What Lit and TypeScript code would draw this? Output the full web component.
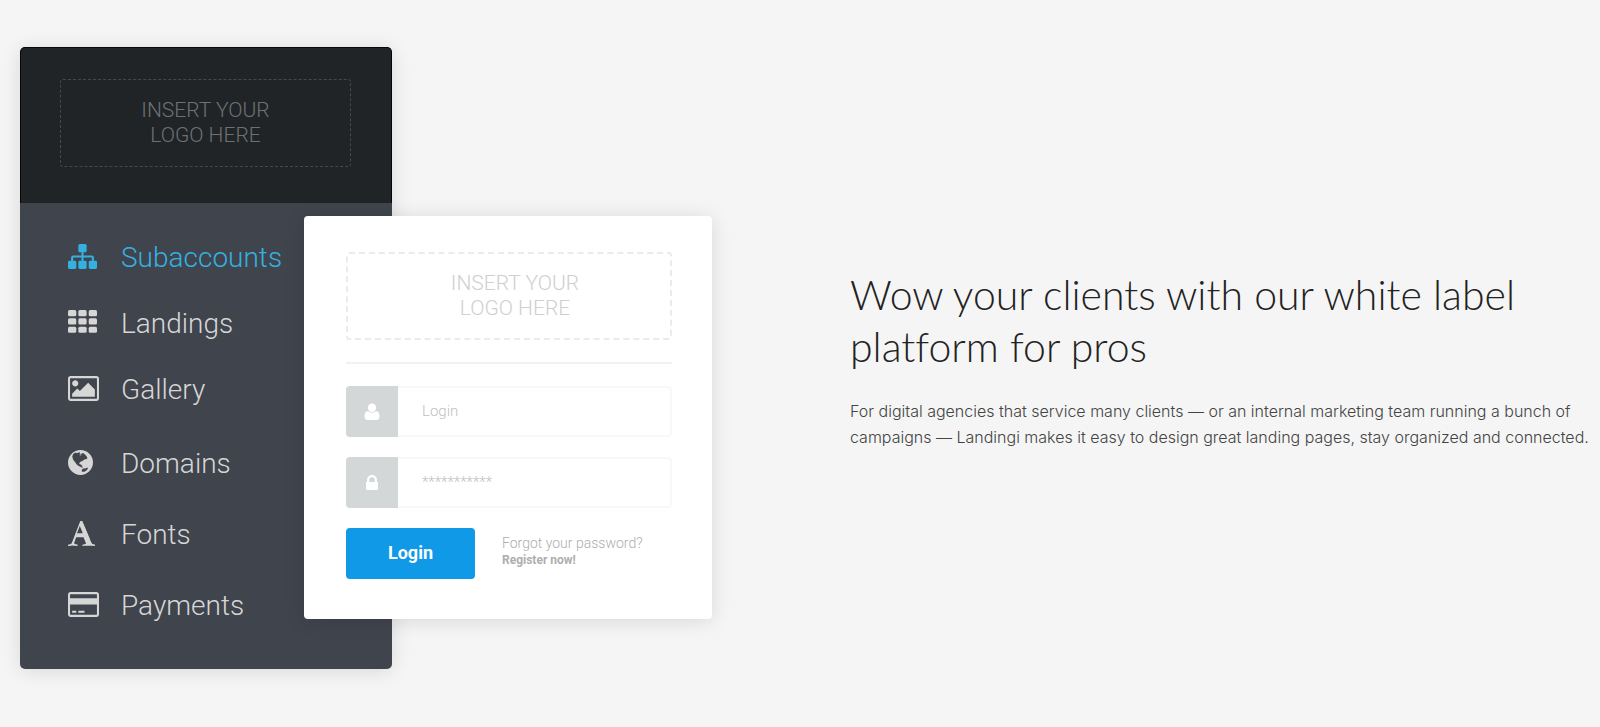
import { LitElement, html, svg, css } from "lit";
import { customElement } from "lit/decorators.js";

const icons = {
  sitemap: svg`<svg class="icon" viewBox="0 0 1792 1792" width="29" height="29" aria-hidden="true"><path d="M1792 1248v320q0 40-28 68t-68 28h-320q-40 0-68-28t-28-68v-320q0-40 28-68t68-28h96v-192h-512v192h96q40 0 68 28t28 68v320q0 40-28 68t-68 28h-320q-40 0-68-28t-28-68v-320q0-40 28-68t68-28h96v-192h-512v192h96q40 0 68 28t28 68v320q0 40-28 68t-68 28h-320q-40 0-68-28t-28-68v-320q0-40 28-68t68-28h96v-192q0-52 38-90t90-38h512v-192h-96q-40 0-68-28t-28-68v-320q0-40 28-68t68-28h320q40 0 68 28t28 68v320q0 40-28 68t-68 28h-96v192h512q52 0 90 38t38 90v192h96q40 0 68 28t28 68z"/></svg>`,
  grid: svg`<svg class="icon" viewBox="0 0 1792 1792" width="29" height="29" aria-hidden="true">${[128, 640, 1152].map((y) =>
    [0, 640, 1280].map((x) => svg`<rect x=${x} y=${y} width="512" height="384" rx="96"/>`)
  )}</svg>`,
  image: svg`<svg class="icon" viewBox="0 0 1920 1792" width="31" height="29" aria-hidden="true"><path d="M640 576q0 80-56 136t-136 56-136-56-56-136 56-136 136-56 136 56 56 136zm1024 384v448h-1408v-192l320-320 160 160 512-512zm96-704h-1600q-13 0-22.500 9.500t-9.500 22.500v1216q0 13 9.500 22.500t22.500 9.500h1600q13 0 22.500-9.500t9.500-22.500v-1216q0-13-9.500-22.500t-22.500-9.500zm160 32v1216q0 66-47 113t-113 47h-1600q-66 0-113-47t-47-113v-1216q0-66 47-113t113-47h1600q66 0 113 47t47 113z"/></svg>`,
  globe: svg`<svg class="icon" viewBox="0 0 25 29" width="25" height="29" aria-hidden="true"><path fill-rule="evenodd" d="M12.500 2a12.500 12.500 0 1 1 0 25a12.500 12.500 0 0 1 0-25zM4.300 8.200L5.200 6 7 4.800l2.500.2 1.900-.8.900 1 -1 1.200 1.400.5.900-1.500 1.500-.4 1.600 1.200 1.700 1.800 1.100 2.300-1.500 1-1.600.2-1.600 1.300-1.800.7-1.300 1.100-.5 1.500 1.500.4 1 .5.100 1.300 1.200.8-.7.600-2-.9-2-1-1.800-1.600-1.500-2.300-1.700-1.900-.7-2zM12.700 5.800l.7 1.500-1.300.3zM14 23.800l-.3-1.700 1.400-1.500 2.100-.2 2.300-.9.400 1.300-1.500 1.800-2 1.200z"/></svg>`,
  font: svg`<svg class="icon" viewBox="0 0 1664 1792" width="27" height="29" aria-hidden="true"><path d="M725 431l-170 450q33 0 136.500 2t160.500 2q19 0 57-2-87-253-184-452zm-725 1233l2-79q23-7 56-12.500t57-10.500 49.500-14.500 44.500-29 31-50.500l237-616 280-724h128q8 14 11 21l205 480q33 78 106 257.500t114 274.500q15 34 58 144.500t72 168.500q20 45 35 57 19 15 88 29.500t84 20.500q6 38 6 57 0 5-.5 13.500t-.5 12.500q-63 0-190-8t-191-8q-76 0-215 7t-178 8q0-43 4-78l131-28q1 0 12.500-2.500t15.500-3.500 14.500-4.500 15-6.500 11-8 9-11 2.500-14q0-16-31-96.500t-72-177.500-42-100l-450-2q-26 58-76.500 195.500t-50.500 162.500q0 22 14 37.500t43.500 24.500 48.500 13.500 57 8.500 41 4q1 19 1 58 0 9-2 27-58 0-174.500-10t-174.500-10q-8 0-26.500 4t-21.500 4q-80 14-188 14z"/></svg>`,
  card: svg`<svg class="icon" viewBox="0 0 1920 1792" width="31" height="29" aria-hidden="true"><path d="M1760 128q66 0 113 47t47 113v1216q0 66-47 113t-113 47h-1600q-66 0-113-47t-47-113v-1216q0-66 47-113t113-47h1600zm-1600 128q-13 0-22.500 9.500t-9.500 22.500v224h1664v-224q0-13-9.500-22.500t-22.500-9.500h-1600zm1600 1280q13 0 22.500-9.500t9.500-22.500v-608h-1664v608q0 13 9.500 22.500t22.500 9.500h1600zm-1504-128v-128h256v128h-256zm384 0v-128h384v128h-384z"/></svg>`,
};

const groups = [
  [
    { label: "Subaccounts", icon: icons.sitemap, active: true },
    { label: "Landings", icon: icons.grid },
    { label: "Gallery", icon: icons.image },
  ],
  [
    { label: "Domains", icon: icons.globe },
    { label: "Fonts", icon: icons.font },
    { label: "Payments", icon: icons.card },
  ],
];

@customElement("app-root")
export class AppRoot extends LitElement {
  static styles = css`
    :host {
      display: block;
      min-height: 100vh;
      background: #f5f5f5;
      font-family: Roboto, "Liberation Sans", sans-serif;
      font-weight: 300;
    }
    * {
      box-sizing: border-box;
    }
    .hero {
      display: grid;
      grid-template-columns: minmax(692px, 1fr) minmax(0, 744px);
      column-gap: 138px;
      align-items: center;
      padding: 47px 6px 58px 20px;
    }
    .showcase {
      display: grid;
      grid-template-columns: 284px 88px 320px;
      align-items: start;
    }
    .panel {
      grid-area: 1 / 1 / 2 / 3;
      border-radius: 5px;
      overflow: hidden;
      background: #40444d;
      box-shadow: 0 2px 20px rgba(0, 0, 0, 0.12);
    }
    .brand {
      padding: 31px 40px 36px 39px;
      background: #202427;
      border: 1px solid #060708;
      border-width: 1px 1px 0;
      border-radius: 5px 5px 0 0;
    }
    .logo {
      display: grid;
      place-items: center;
      height: 88px;
      border: 1px dashed #46494c;
      border-radius: 3px;
      font-size: 21px;
      line-height: 25px;
      text-align: center;
      color: #6e7173;
    }
    .menu {
      display: grid;
      gap: 34px;
      padding: 34px 48px 44px;
    }
    .group {
      display: grid;
      gap: 26px;
      margin: 0;
      padding: 0;
      list-style: none;
    }
    .group + .group {
      gap: 31px;
    }
    .item {
      display: grid;
      grid-template-columns: 53px auto;
      align-items: center;
      height: 40px;
      font-size: 28px;
      color: #d6d6d6;
      text-decoration: none;
    }
    .item .icon {
      margin-bottom: 2px;
    }
    .active {
      color: #35b1e1;
    }
    .icon {
      display: block;
      fill: currentColor;
    }
    .card {
      grid-area: 1 / 2 / 2 / 4;
      z-index: 1;
      margin-top: 169px;
      padding: 36px 40px 40px 42px;
      border-radius: 4px;
      background: #fff;
      box-shadow: 0 2px 20px rgba(0, 0, 0, 0.12);
    }
    .card .logo {
      padding-left: 12px;
      border: 2px dashed #ebebeb;
      color: #cfcfcf;
    }
    .rule {
      height: 2px;
      margin: 22px 0;
      border: 0;
      background: #f1f1f1;
    }
    .field {
      display: grid;
      grid-template-columns: 52px 1fr;
      height: 51px;
      margin-bottom: 20px;
      border-radius: 4px;
      overflow: hidden;
    }
    .addon {
      display: grid;
      place-items: center;
      background: #d3d7d8;
      color: #fff;
    }
    .input {
      width: 100%;
      min-width: 0;
      margin: 0;
      padding: 0 24px 2px;
      border: 2px solid #f8f8f8;
      border-left: 0;
      border-radius: 0 4px 4px 0;
      outline: 0;
      background: #fff;
      font: inherit;
      font-size: 15px;
      color: #bfbfbf;
    }
    .input::placeholder {
      color: #bfbfbf;
      opacity: 1;
    }
    .actions {
      display: flex;
      align-items: center;
      gap: 27px;
    }
    .submit {
      width: 129px;
      height: 51px;
      padding-bottom: 3px;
      border: 0;
      border-radius: 4px;
      background: #1099e6;
      color: #fff;
      font: inherit;
      font-size: 18px;
      font-weight: 700;
    }
    .links {
      display: grid;
      font-size: 14px;
      line-height: 17px;
      padding-bottom: 4px;
    }
    .link {
      color: #aeaeae;
      text-decoration: none;
    }
    .strong {
      font-size: 12px;
      font-weight: 700;
    }
    .copy {
      padding-top: 2px;
      font-family: Lato, "Open Sans", sans-serif;
      font-variant-ligatures: none;
      color: #222;
    }
    .title {
      margin: 0 0 25px;
      font-size: 41px;
      line-height: 52px;
      font-weight: 300;
    }
    .text {
      margin: 0;
      font-family: Inter, Lato, sans-serif;
      font-size: 16px;
      line-height: 26px;
      color: #444;
    }
  `;

  render() {
    return html`
      <main class="hero">
        <div class="showcase">
          <section class="panel">
            <div class="brand"><div class="logo">INSERT YOUR<br />LOGO HERE</div></div>
            <nav class="menu">
              ${groups.map(
                (group) => html`<ul class="group">
                  ${group.map(
                    (i) => html`<li>
                      <a class=${i.active ? "item active" : "item"} href="#">${i.icon}<span>${i.label}</span></a>
                    </li>`
                  )}
                </ul>`
              )}
            </nav>
          </section>
          <form class="card">
            <div class="logo">INSERT YOUR<br />LOGO HERE</div>
            <hr class="rule" />
            <div class="field">
              <label class="addon" for="login" aria-label="Login">
                <svg class="icon" viewBox="0 0 16 18" width="16" height="18" aria-hidden="true">
                  <path d="M3.700 8C1.300 8.400.5 10.700.5 13.500c0 2 1 3.500 3 3.500h9c2 0 3-1.500 3-3.500 0-2.800-.8-5.100-3.200-5.500A6 6 0 0 1 8 9.800 6 6 0 0 1 3.700 8z" />
                  <circle cx="8" cy="4.700" r="4.200" />
                </svg>
              </label>
              <input class="input" id="login" type="text" placeholder="Login" />
            </div>
            <div class="field">
              <label class="addon" for="password" aria-label="Password">
                <svg class="icon" viewBox="0 0 14 16" width="14" height="16" aria-hidden="true">
                  <path fill-rule="evenodd" d="M2 7V5a5 5 0 0 1 10 0v2h.2q.8 0 .8.800v6.400q0 .8-.8.800H1.800q-.8 0-.8-.8V7.800Q1 7 1.800 7zM4.300 7h5.400V5a2.700 2.700 0 0 0-5.400 0z" />
                </svg>
              </label>
              <input class="input" id="password" type="password" placeholder="***********" />
            </div>
            <div class="actions">
              <button class="submit" type="button">Login</button>
              <div class="links">
                <a class="link" href="#">Forgot your password?</a>
                <a class="link strong" href="#">Register now!</a>
              </div>
            </div>
          </form>
        </div>
        <section class="copy">
          <h1 class="title">Wow your clients with our white label platform for pros</h1>
          <p class="text">
            For digital agencies that service many clients — or an internal marketing team running a bunch of
            campaigns — Landingi makes it easy to design great landing pages, stay organized and connected.
          </p>
        </section>
      </main>
    `;
  }
}
